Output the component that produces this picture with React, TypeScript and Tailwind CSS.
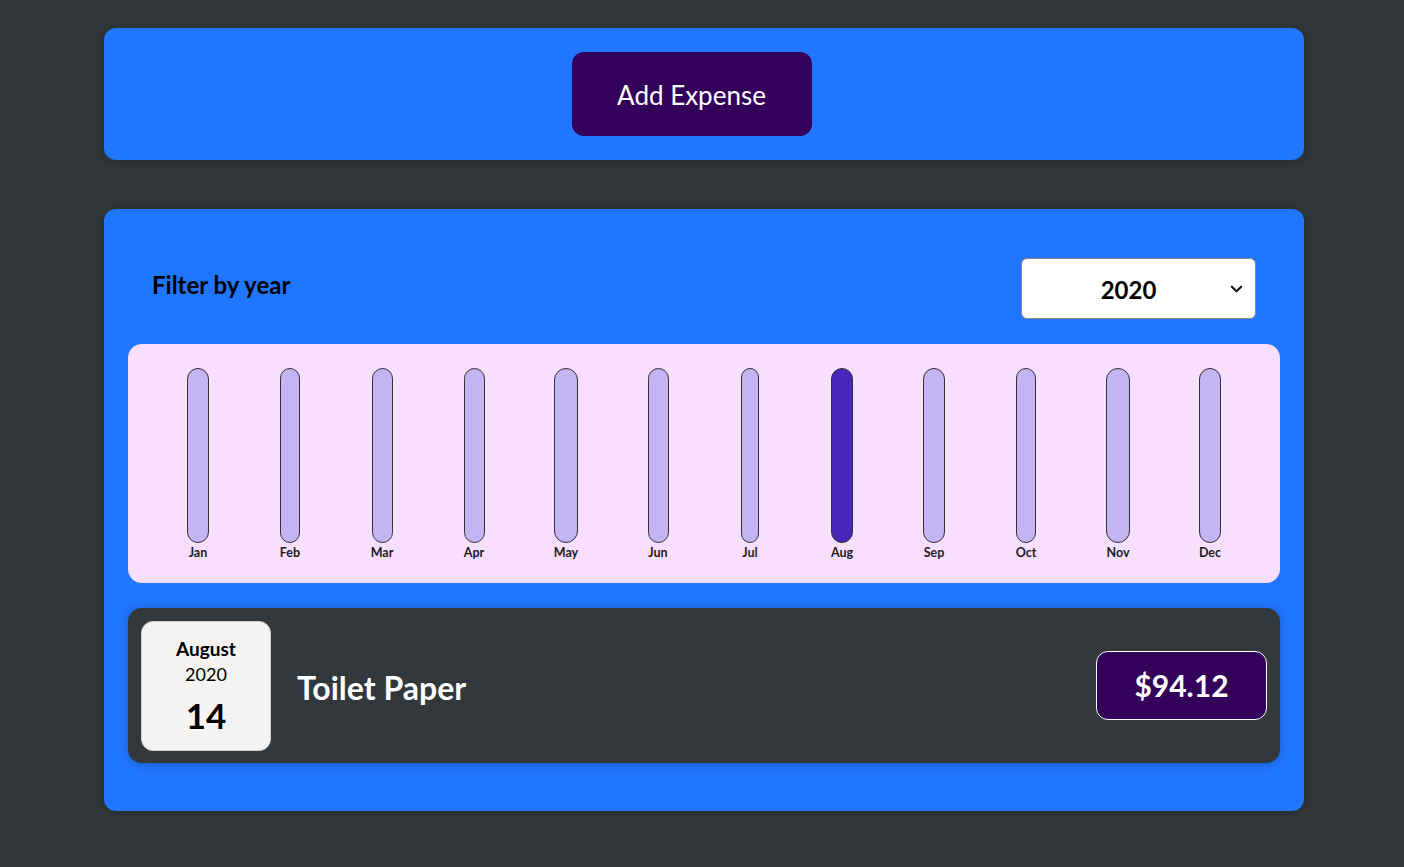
import React from 'react';

const months = [
  { label: 'Jan', value: 0, w: 'w-[22px]' },
  { label: 'Feb', value: 0, w: 'w-[20px]' },
  { label: 'Mar', value: 0, w: 'w-[21px]' },
  { label: 'Apr', value: 0, w: 'w-[21px]' },
  { label: 'May', value: 0, w: 'w-[24px]' },
  { label: 'Jun', value: 0, w: 'w-[21px]' },
  { label: 'Jul', value: 0, w: 'w-[18px]' },
  { label: 'Aug', value: 94.12, w: 'w-[22px]' },
  { label: 'Sep', value: 0, w: 'w-[22px]' },
  { label: 'Oct', value: 0, w: 'w-[20px]' },
  { label: 'Nov', value: 0, w: 'w-[24px]' },
  { label: 'Dec', value: 0, w: 'w-[22px]' },
];

function ChartBar({ label, active, w }: { label: string; active: boolean; w: string }) {
  return (
    <div className="flex w-[92px] flex-col items-center">
      <div
        className={`h-[175px] ${w} rounded-full border border-[#313131] ${
          active ? 'bg-[#4826b9]' : 'bg-[#c3b4f3]'
        }`}
      />
      <div className="mt-[2px] text-center text-[12.5px] font-bold leading-[16px] text-[#1b1b1b]">
        {label}
      </div>
    </div>
  );
}

export default function App() {
  const [year, setYear] = React.useState('2020');

  return (
    <div className="min-h-[867px] bg-[#313739] pt-[28px] font-['Lato','Noto_Sans',sans-serif]">
      <div className="ml-[104px] w-[1200px] space-y-[49px]">
        <div className="flex h-[132px] items-center justify-center rounded-[12px] bg-[#2176ff] shadow-[0_1px_8px_rgba(0,0,0,0.25)]">
          <button className="mr-[25px] h-[84px] w-[240px] rounded-[12px] bg-[#33005a] pt-[2px] text-[26px] text-white">
            Add Expense
          </button>
        </div>

        <div className="rounded-[12px] bg-[#2176ff] px-[24px] pb-[48px] pt-[49px] shadow-[0_1px_8px_rgba(0,0,0,0.25)]">
          <div className="flex items-center justify-between px-[24px]">
            <span className="mb-[7px] text-[24px] font-bold text-black">Filter by year</span>
            <div className="relative">
              <select
                value={year}
                onChange={(e) => setYear(e.target.value)}
                className="h-[61px] w-[235px] appearance-none rounded-[6px] border border-[#8a8a8a] bg-white pr-[20px] pt-[3px] text-center text-[24px] font-bold text-black outline-none"
              >
                <option>2022</option>
                <option>2021</option>
                <option>2020</option>
                <option>2019</option>
              </select>
              <svg
                className="pointer-events-none absolute right-[12px] top-1/2 h-[15px] w-[15px] -translate-y-1/2"
                viewBox="0 0 16 16"
                fill="none"
                stroke="#111"
                strokeWidth="2.2"
                strokeLinecap="round"
                strokeLinejoin="round"
              >
                <path d="M3 5.5l5 5 5-5" />
              </svg>
            </div>
          </div>

          <div className="mt-[25px] flex h-[239px] rounded-[14px] bg-[#f8dfff] px-[24px] pt-[24px]">
            {months.map((m) => (
              <ChartBar key={m.label} label={m.label} active={m.value > 0} w={m.w} />
            ))}
          </div>

          <div className="mt-[25px] flex h-[155px] items-center rounded-[14px] bg-[#32383b] px-[13px] shadow-[0_1px_8px_rgba(0,0,0,0.25)]">
            <div className="flex h-[130px] w-[130px] flex-col items-center rounded-[12px] border border-[#cfcfcf] bg-[#f5f3f2] pt-[14px] text-black">
              <div className="text-[19px] font-bold leading-[25px]">August</div>
              <div className="text-[18px] leading-[26px]">2020</div>
              <div className="mt-[6px] text-[35px] font-bold leading-[44px]">14</div>
            </div>
            <h2 className="mb-[-4px] ml-[26px] flex-1 text-[32px] font-bold text-white">Toilet Paper</h2>
            <div className="flex h-[69px] w-[171px] items-center justify-center rounded-[12px] border border-white bg-[#33005a] text-[30px] font-bold text-white">
              $94.12
            </div>
          </div>
        </div>
      </div>
    </div>
  );
}
